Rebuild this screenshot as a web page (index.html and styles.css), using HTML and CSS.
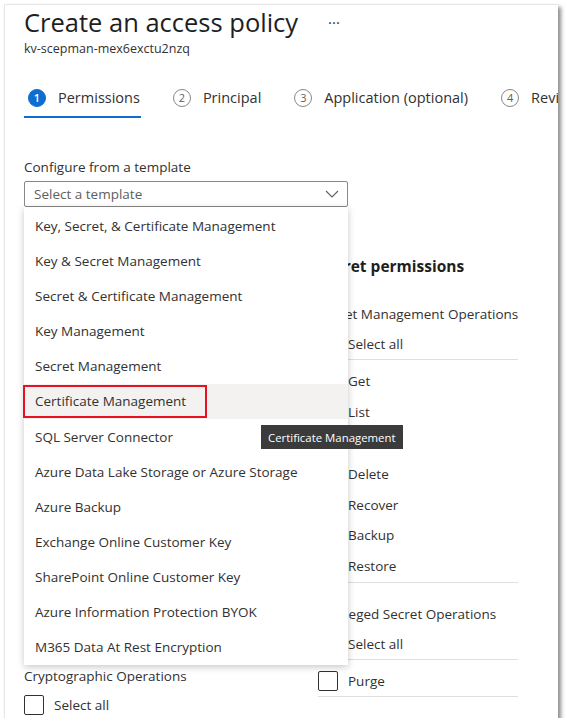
FILE: index.html
```html
<!DOCTYPE html>
<html lang="en">
<head>
<meta charset="utf-8">
<title>Create an access policy</title>
<link rel="stylesheet" href="styles.css">
</head>
<body>
<div class="panel">
  <header class="head">
    <div class="title-row">
      <h1 class="title">Create an access policy</h1>
      <span class="more">···</span>
    </div>
    <div class="subtitle">kv-scepman-mex6exctu2nzq</div>
  </header>

  <nav class="tabs">
    <div class="tab active"><span class="num">1</span><span class="tab-label">Permissions</span></div>
    <div class="tab tab-2"><span class="num">2</span><span class="tab-label">Principal</span></div>
    <div class="tab tab-3"><span class="num">3</span><span class="tab-label">Application (optional)</span></div>
    <div class="tab tab-4"><span class="num">4</span><span class="tab-label">Review + create</span></div>
  </nav>

  <section class="template">
    <div class="field-label">Configure from a template</div>
    <div class="select-wrap">
      <div class="select">
        <span class="placeholder">Select a template</span>
        <svg class="chevron" width="14" height="8" viewBox="0 0 14 8"><path d="M1 1 L7 7 L13 1" fill="none" stroke="#605e5c" stroke-width="1.1"/></svg>
      </div>
      <ul class="menu">
        <li class="opt">Key, Secret, &amp; Certificate Management</li>
        <li class="opt">Key &amp; Secret Management</li>
        <li class="opt">Secret &amp; Certificate Management</li>
        <li class="opt">Key Management</li>
        <li class="opt">Secret Management</li>
        <li class="opt hover"><span class="mark"></span>Certificate Management</li>
        <li class="opt">SQL Server Connector</li>
        <li class="opt">Azure Data Lake Storage or Azure Storage</li>
        <li class="opt">Azure Backup</li>
        <li class="opt">Exchange Online Customer Key</li>
        <li class="opt">SharePoint Online Customer Key</li>
        <li class="opt">Azure Information Protection BYOK</li>
        <li class="opt">M365 Data At Rest Encryption</li>
      </ul>
      <div class="tooltip">Certificate Management</div>
    </div>
  </section>

  <section class="perms">
    <div class="col">
      <h2 class="perm-title">Key permissions</h2>
      <div class="group">
        <div class="group-title">Key Management Operations</div>
        <label class="row all"><span class="box"></span>Select all</label>
        <div class="items">
          <label class="row"><span class="box"></span>Get</label>
          <label class="row"><span class="box"></span>List</label>
          <label class="row"><span class="box"></span>Update</label>
          <label class="row"><span class="box"></span>Create</label>
          <label class="row"><span class="box"></span>Import</label>
          <label class="row"><span class="box"></span>Delete</label>
          <label class="row"><span class="box"></span>Recover</label>
          <label class="row"><span class="box"></span>Backup</label>
          <label class="row"><span class="box"></span>Restore</label>
        </div>
      </div>
      <div class="group">
        <div class="group-title">Cryptographic Operations</div>
        <label class="row all"><span class="box"></span>Select all</label>
      </div>
    </div>
    <div class="col">
      <h2 class="perm-title">Secret permissions</h2>
      <div class="group">
        <div class="group-title">Secret Management Operations</div>
        <label class="row all"><span class="box"></span>Select all</label>
        <div class="items">
          <label class="row"><span class="box"></span>Get</label>
          <label class="row"><span class="box"></span>List</label>
          <label class="row"><span class="box"></span>Set</label>
          <label class="row"><span class="box"></span>Delete</label>
          <label class="row"><span class="box"></span>Recover</label>
          <label class="row"><span class="box"></span>Backup</label>
          <label class="row"><span class="box"></span>Restore</label>
        </div>
      </div>
      <div class="group">
        <div class="group-title">Privileged Secret Operations</div>
        <label class="row all"><span class="box"></span>Select all</label>
        <div class="items">
          <label class="row"><span class="box"></span>Purge</label>
        </div>
      </div>
    </div>
  </section>
</div>
</body>
</html>
```

FILE: styles.css
```css
* { box-sizing: border-box; }

html, body {
  margin: 0;
  padding: 0;
  background: #ffffff;
}

body {
  font-family: "Open Sans", "Noto Sans", sans-serif;
  color: #323130;
  font-size: 13.5px;
}

.panel {
  position: relative;
  margin: 4px 0 0 4px;
  width: 554px;
  height: 714px;
  background: #ffffff;
  border-top: 1px solid #e6e6e6;
  border-left: 1px solid #e6e6e6;
  box-shadow: 3px 3px 4px rgba(0, 0, 0, 0.45);
  overflow: hidden;
  padding-left: 19px;
}

.title-row {
  display: flex;
  align-items: center;
  height: 34px;
}

.title {
  margin: 0;
  font-size: 25.5px;
  font-weight: 400;
  color: #201f1e;
  line-height: 34px;
  white-space: nowrap;
}

.more {
  margin-left: 30px;
  font-size: 15px;
  color: #323130;
  line-height: 34px;
}

.subtitle {
  margin-top: 2px;
  font-size: 12.5px;
  line-height: 16px;
  color: #323130;
}

.tabs {
  display: flex;
  margin-top: 31px;
  white-space: nowrap;
}

.tab {
  display: flex;
  align-items: center;
  padding: 0 1px 8px 4px;
  border-bottom: 2px solid transparent;
  height: 30px;
  margin-right: 28px;
}

.tab.active {
  border-bottom-color: #0f6cd0;
}

.num {
  width: 18px;
  height: 18px;
  border-radius: 50%;
  border: 1px solid #8a8886;
  color: #605e5c;
  font-size: 11px;
  line-height: 16px;
  text-align: center;
  margin-right: 12px;
  flex: none;
}

.tab.active .num {
  background: #0f6cd0;
  border-color: #0f6cd0;
  color: #ffffff;
  font-weight: 600;
}

.tab-label {
  font-size: 14.5px;
  line-height: 20px;
  color: #323130;
}

.template {
  margin-top: 40px;
}

.field-label {
  font-size: 13.5px;
  line-height: 18px;
}

.select-wrap {
  position: relative;
  width: 324px;
  margin-top: 5px;
}

.select {
  height: 26px;
  border: 1px solid #8a8886;
  border-radius: 2px;
  display: flex;
  align-items: center;
  justify-content: space-between;
  padding: 0 8px 0 9px;
}

.placeholder {
  color: #605e5c;
  font-size: 13.5px;
}

.chevron {
  display: block;
}

.menu {
  position: absolute;
  left: 0;
  top: 26px;
  width: 324px;
  margin: 0;
  padding: 1px 0 0;
  list-style: none;
  background: #ffffff;
  box-shadow: 0 2px 7px rgba(0, 0, 0, 0.22);
  z-index: 5;
}

.opt {
  position: relative;
  height: 35.17px;
  display: flex;
  align-items: center;
  padding-left: 11px;
  font-size: 13.5px;
  color: #323130;
  white-space: nowrap;
}

.opt.hover {
  background: #f3f2f1;
}

.mark {
  position: absolute;
  left: -1px;
  top: 1px;
  width: 184px;
  height: 33px;
  border: 2px solid #e81123;
}

.tooltip {
  position: absolute;
  left: 237px;
  top: 244px;
  height: 24px;
  padding: 0 7px;
  display: flex;
  align-items: center;
  background: #3b3b3b;
  color: #ffffff;
  font-size: 11.4px;
  white-space: nowrap;
  z-index: 6;
}

.perms {
  display: grid;
  grid-template-columns: 200px 200px;
  column-gap: 94px;
  margin-top: 48px;
}

.perm-title {
  margin: 0;
  font-size: 15.5px;
  font-weight: 700;
  line-height: 22px;
  color: #201f1e;
  white-space: nowrap;
}

.group {
  margin-top: 28px;
}

.group + .group {
  margin-top: 22.5px;
}

.group-title {
  font-size: 13.5px;
  line-height: 18px;
  white-space: nowrap;
}

.row {
  display: flex;
  align-items: center;
  height: 30.85px;
  gap: 10px;
  font-size: 13.5px;
}

.row.all {
  margin-top: 6.5px;
  border-bottom: 1px solid #e1dfdd;
}

.group + .group .row.all {
  margin-top: 5.5px;
}

.items {
  padding-top: 5.5px;
  border-bottom: 1px solid #e1dfdd;
}

.box {
  width: 20px;
  height: 20px;
  border: 1px solid #323130;
  border-radius: 2px;
  flex: none;
}
```
